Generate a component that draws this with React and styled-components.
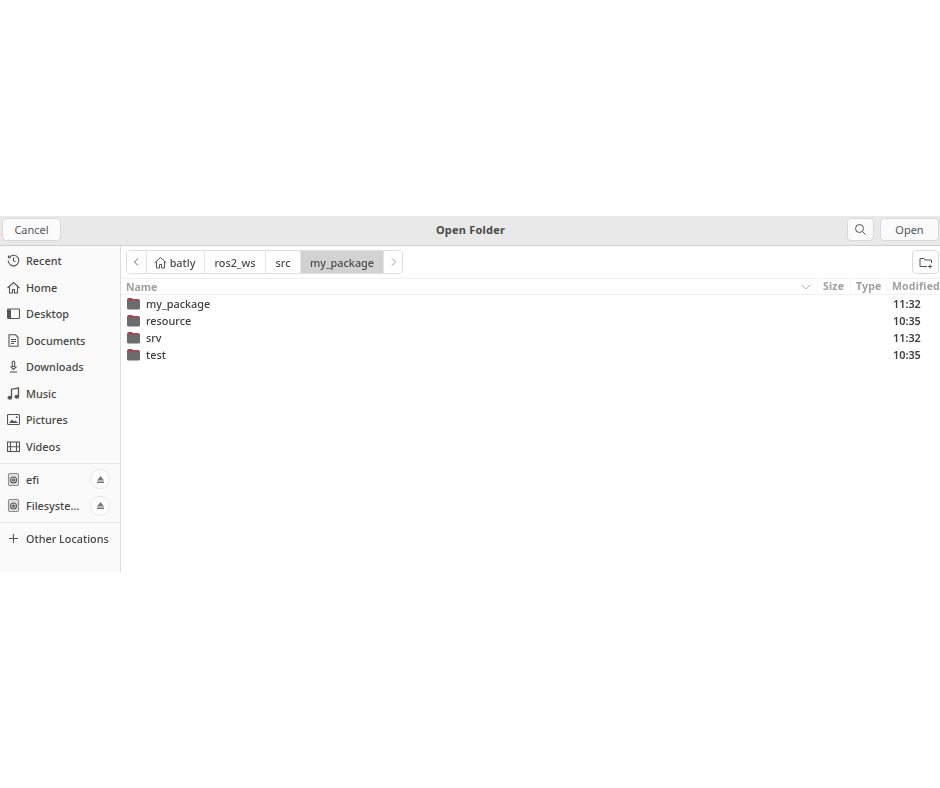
import React from 'react';
import styled, { createGlobalStyle } from 'styled-components';

const GlobalStyle = createGlobalStyle`
  html, body {
    margin: 0;
    padding: 0;
    background: #ffffff;
  }
  body {
    font-family: "Noto Sans", "Open Sans", sans-serif;
    color: #3d3d3d;
  }
`;

const Page = styled.div`
  width: 940px;
  height: 788px;
  padding-top: 216px;
  box-sizing: border-box;
  overflow: hidden;
`;

// the reference is a slightly soft, upscaled capture
const Dialog = styled.div`
  width: 940px;
  height: 356px;
  display: flex;
  flex-direction: column;
  filter: blur(0.35px);
`;

const TitleBar = styled.header`
  height: 30px;
  box-sizing: border-box;
  padding: 2px 1px 0 2px;
  display: grid;
  grid-template-columns: 1fr auto 1fr;
  align-items: start;
  background: #e9e9e9;
  border-bottom: 1px solid #cfcfcf;
`;

const HeaderGroup = styled.div`
  display: flex;
  justify-content: ${p => p.$end ? 'flex-end' : 'flex-start'};
  gap: 6px;
`;

const HeaderButton = styled.button`
  height: 23px;
  width: ${p => p.$width}px;
  padding: 0;
  display: flex;
  align-items: center;
  justify-content: center;
  font: 400 11px "Noto Sans", sans-serif;
  color: #555555;
  background: #fbfbfb;
  border: 1px solid #d8d8d8;
  border-radius: 4px;
`;

const Title = styled.h1`
  margin: 0;
  font-size: 11px;
  font-weight: 700;
  line-height: 23px;
  color: #4a4a4a;
  letter-spacing: 0.2px;
`;

const Body = styled.div`
  flex: 1;
  display: flex;
  min-height: 0;
`;

const Sidebar = styled.nav`
  width: 121px;
  box-sizing: border-box;
  padding-top: 1.4px;
  background: #fafafa;
  border-right: 1px solid #dcdcdc;
  flex-shrink: 0;
`;

const Section = styled.div`
  padding: ${p => p.$first ? '0 0 3px' : '2px 0 2.9px'};
  border-bottom: ${p => p.$last ? 'none' : '1px solid #e6e6e6'};
`;

const PlaceRow = styled.div`
  height: 26.55px;
  display: flex;
  align-items: center;
  padding-left: 7px;
  font-size: 10.85px;
  font-weight: 500;
  color: #454545;
`;

const PlaceIcon = styled.svg`
  width: 13px;
  height: 13px;
  flex-shrink: 0;
  margin-right: 6px;
  fill: none;
  stroke: #555555;
  stroke-width: 1.1;
`;

const PlaceLabel = styled.span`
  flex: 1;
  white-space: nowrap;
`;

const EjectButton = styled.span`
  width: 20px;
  height: 20px;
  margin-right: 10px;
  box-sizing: border-box;
  display: flex;
  align-items: center;
  justify-content: center;
  border: 1px solid #e8e8e8;
  border-radius: 50%;
  background: #fcfcfc;
`;

const Main = styled.main`
  flex: 1;
  min-width: 0;
  display: flex;
  flex-direction: column;
`;

const PathRow = styled.div`
  height: 32px;
  box-sizing: border-box;
  padding: 4px 1px 0 5px;
  display: flex;
  align-items: flex-start;
  justify-content: space-between;
`;

const PathBar = styled.div`
  display: flex;
  height: 24px;
  box-sizing: border-box;
  border: 1px solid #dedede;
  border-radius: 4px;
  overflow: hidden;
`;

const Crumb = styled.div`
  width: ${p => p.$width}px;
  display: flex;
  align-items: center;
  justify-content: center;
  gap: 3px;
  padding-right: ${p => p.$home ? 2 : 0}px;
  font-size: 10.85px;
  font-weight: 500;
  color: #4a4a4a;
  background: ${p => p.$active ? '#d2d2d2' : '#ffffff'};
  border-left: ${p => p.$first ? 'none' : '1px solid #e4e4e4'};
  box-sizing: border-box;
`;

const IconButton = styled.button`
  width: 27px;
  height: 24px;
  padding: 0;
  display: flex;
  align-items: center;
  justify-content: center;
  background: #fdfdfd;
  border: 1px solid #dcdcdc;
  border-radius: 4px;
`;

const Columns = styled.div`
  height: 17px;
  box-sizing: border-box;
  display: flex;
  align-items: center;
  border-top: 1px solid #f0f0f0;
  border-bottom: 1px solid #f0f0f0;
  font-size: 10.5px;
  font-weight: 700;
  color: #a0a0a0;
`;

const NameColumn = styled.span`
  flex: 1;
  display: flex;
  align-items: center;
  justify-content: space-between;
  padding: 0 6px 0 5px;
`;

const Column = styled.span`
  width: ${p => p.$width}px;
  height: 100%;
  box-sizing: border-box;
  padding-left: 5px;
  letter-spacing: 0.2px;
  white-space: nowrap;
  border-left: 1px solid #f6f6f6;
`;

const FileList = styled.ul`
  list-style: none;
  margin: 0;
  padding: 0.5px 0 0;
`;

const FileRow = styled.li`
  height: 16.75px;
  display: flex;
  align-items: center;
  padding-left: 6px;
  font-size: 10.85px;
  font-weight: 500;
  color: #3d3d3d;
`;

const FileName = styled.span`
  flex: 1;
  margin-left: 6px;
`;

const FileTime = styled.span`
  width: 47px;
  font-weight: 600;
`;

const glyphs = {
  recent: <><path d="M2.4 3.2A5.3 5.3 0 1 1 1.2 6.5" /><path d="M1.5 1.5v2.3h2.3" /><path d="M6.5 3.5v3.2l2 1.2" /></>,
  home: <><path d="M0.5 7l6-5.5 6 5.5" /><path d="M2.5 5.5v6.5h3V8.5h2V12h3V5.5" /></>,
  desktop: <><rect x="0.5" y="2" width="12" height="9.5" rx="1" /><rect x="1" y="2.5" width="3" height="8.5" fill="#555555" stroke="none" /></>,
  documents: <><path d="M2 0.8h6.5L11 3.3v9H2z" /><path d="M4 5.5h5M4 7.5h5M4 9.5h3" /></>,
  downloads: <><path d="M6.5 1a1.2 1.2 0 0 1 1.2 1.2v4.3H5.3V2.2A1.2 1.2 0 0 1 6.5 1z" /><path d="M3.5 6.5l3 3 3-3" /><path d="M3 12h7" /></>,
  music: <><path d="M4.5 10.5V2.2l7-1.2v8.5" strokeWidth="1.3" /><ellipse cx="2.8" cy="10.7" rx="1.8" ry="1.4" fill="#555555" /><ellipse cx="9.8" cy="9.7" rx="1.8" ry="1.4" fill="#555555" /></>,
  pictures: <><rect x="0.5" y="1.5" width="12" height="10" rx="1" /><path d="M2 10l3-3.5 2 2 1.5-1 2.5 2.5z" fill="#555555" stroke="none" /><circle cx="9.7" cy="4.2" r="0.9" fill="#555555" stroke="none" /></>,
  videos: <><rect x="0.5" y="2" width="12" height="9.5" /><path d="M3.5 2v9.5M9.5 2v9.5M0.5 6.7h12" /></>,
  drive: <><rect x="1.5" y="0.5" width="10" height="12" rx="1.5" fill="#e2e2e2" stroke="#8a8a8a" /><circle cx="6.5" cy="7" r="3" /><circle cx="6.5" cy="7" r="1" /></>,
  plus: <path d="M6.5 2v9M2 6.5h9" />,
};

const Place = ({ icon, label, eject }) => (
  <PlaceRow>
    <PlaceIcon viewBox="0 0 13 13">{glyphs[icon]}</PlaceIcon>
    <PlaceLabel>{label}</PlaceLabel>
    {eject && (
      <EjectButton>
        <svg width="9" height="9" viewBox="0 0 9 9" fill="#777777">
          <path d="M4.5 1L8 5.5H1z" />
          <rect x="1" y="6.5" width="7" height="1.5" />
        </svg>
      </EjectButton>
    )}
  </PlaceRow>
);

const Folder = () => (
  <svg width="13" height="13" viewBox="0 0 13 13">
    <path d="M0 3a2 2 0 0 1 2-2h3l1 1h5a2 2 0 0 1 2 2v1H0z" fill="#a34650" />
    <rect y="3.6" width="13" height="8.9" rx="1.5" fill="#6c6c6c" />
  </svg>
);

const files = [
  ['my_package', '11:32'],
  ['resource', '10:35'],
  ['srv', '11:32'],
  ['test', '10:35'],
];

export default function App() {
  return (
    <Page>
      <GlobalStyle />
      <Dialog>
        <TitleBar>
          <HeaderGroup>
            <HeaderButton $width={59}>Cancel</HeaderButton>
          </HeaderGroup>
          <Title>Open Folder</Title>
          <HeaderGroup $end>
            <HeaderButton $width={27}>
              <svg width="13" height="13" viewBox="0 0 13 13" fill="none" stroke="#555555">
                <circle cx="5.5" cy="5.5" r="4" />
                <path d="M8.5 8.5l3 3" />
              </svg>
            </HeaderButton>
            <HeaderButton $width={59}>Open</HeaderButton>
          </HeaderGroup>
        </TitleBar>
        <Body>
          <Sidebar>
            <Section $first>
              <Place icon="recent" label="Recent" />
              <Place icon="home" label="Home" />
              <Place icon="desktop" label="Desktop" />
              <Place icon="documents" label="Documents" />
              <Place icon="downloads" label="Downloads" />
              <Place icon="music" label="Music" />
              <Place icon="pictures" label="Pictures" />
              <Place icon="videos" label="Videos" />
            </Section>
            <Section>
              <Place icon="drive" label="efi" eject />
              <Place icon="drive" label="Filesyste…" eject />
            </Section>
            <Section $last>
              <Place icon="plus" label="Other Locations" />
            </Section>
          </Sidebar>
          <Main>
            <PathRow>
              <PathBar>
                <Crumb $first $width={19}>
                  <svg width="9" height="10" viewBox="0 0 9 10" fill="none" stroke="#666666">
                    <path d="M6 1.5L2.5 5 6 8.5" />
                  </svg>
                </Crumb>
                <Crumb $home $width={58}>
                  <svg width="13" height="13" viewBox="0 0 13 13" fill="none" stroke="#555555">
                    {glyphs.home}
                  </svg>
                  batly
                </Crumb>
                <Crumb $width={61}>ros2_ws</Crumb>
                <Crumb $width={35}>src</Crumb>
                <Crumb $active $width={83}>my_package</Crumb>
                <Crumb $width={19}>
                  <svg width="9" height="10" viewBox="0 0 9 10" fill="none" stroke="#999999">
                    <path d="M3 1.5L6.5 5 3 8.5" />
                  </svg>
                </Crumb>
              </PathBar>
              <IconButton>
                <svg width="14" height="13" viewBox="0 0 14 13" fill="none" stroke="#555555">
                  <path d="M1 10.5v-8h4l1 1.5h6.5v3" />
                  <path d="M1 10.5h7" />
                  <path d="M11 8.5v4M9 10.5h4" />
                </svg>
              </IconButton>
            </PathRow>
            <Columns>
              <NameColumn>
                Name
                <svg width="10" height="6" viewBox="0 0 10 6" fill="none" stroke="#b5b5b5">
                  <path d="M1 1l4 4 4-4" />
                </svg>
              </NameColumn>
              <Column $width={33}>Size</Column>
              <Column $width={36}>Type</Column>
              <Column $width={54}>Modified</Column>
            </Columns>
            <FileList>
              {files.map(([name, time]) => (
                <FileRow key={name}>
                  <Folder />
                  <FileName>{name}</FileName>
                  <FileTime>{time}</FileTime>
                </FileRow>
              ))}
            </FileList>
          </Main>
        </Body>
      </Dialog>
    </Page>
  );
}
